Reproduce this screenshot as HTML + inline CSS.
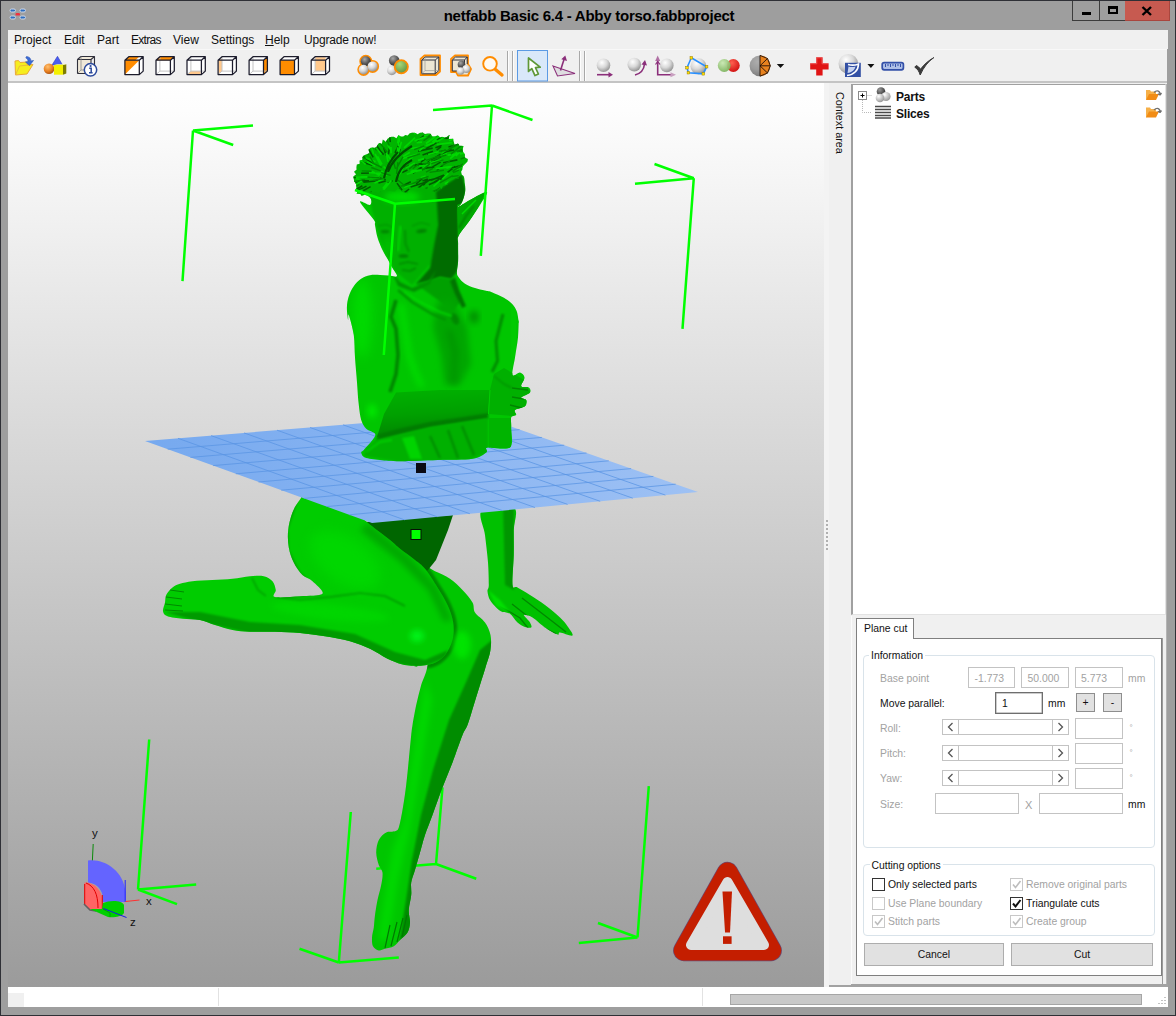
<!DOCTYPE html>
<html lang="en">
<head>
<meta charset="utf-8">
<title>netfabb Basic 6.4 - Abby torso.fabbproject</title>
<style>
html,body{margin:0;padding:0;}
body{width:1176px;height:1016px;overflow:hidden;position:relative;background:#9e9e9e;font-family:"Liberation Sans",sans-serif;font-size:12px;color:#000;}
.abs{position:absolute;}
#frame{left:0;top:0;width:1176px;height:1016px;box-sizing:border-box;border:1px solid #2f3036;}
#title{left:1px;top:5.5px;width:1176px;text-align:center;font-weight:bold;font-size:15px;line-height:20px;color:#000;letter-spacing:-0.25px;}
#capbtns{left:1072px;top:1px;height:20px;}
.cb{position:absolute;top:0;height:20px;box-sizing:border-box;border:1px solid #3c3c3c;border-top:none;}
#menubar{left:8px;top:30px;width:1160px;height:19px;background:#f0f0f0;}
.mi{position:absolute;top:3px;line-height:14px;font-size:12px;white-space:nowrap;color:#111;}
#toolbar{left:8px;top:49px;width:1159px;height:33px;background:#f0f0f0;border-top:1px solid #f8f8f8;box-sizing:border-box;}
#tbline{left:8px;top:81px;width:1159px;height:2px;background:#c4c4c4;}
#viewport{left:8px;top:83px;width:816px;height:904px;background:linear-gradient(#ffffff 0%,#fdfdfd 3%,#9b9b9b 100%);overflow:hidden;}
#splitter{left:824px;top:83px;width:5px;height:904px;background:#f3f3f3;}
#ctx{left:829px;top:83px;width:22px;height:904px;background:#f0f0f0;}
#ctxtext{left:845.5px;top:92px;font-size:10.8px;line-height:12px;white-space:nowrap;transform-origin:0 0;transform:rotate(90deg);color:#111;}
#rightbg{left:851px;top:83px;width:316px;height:904px;background:#f0f0f0;}
#tree{left:851px;top:84px;width:315px;height:531px;box-sizing:border-box;background:#fff;border-left:2px solid #a0a0a0;border-top:1px solid #a0a0a0;border-right:1px solid #e3e3e3;border-bottom:1px solid #e3e3e3;}
.tl{position:absolute;font-weight:bold;font-size:12px;line-height:14px;color:#111;letter-spacing:-0.2px;}
#tabpage{left:856px;top:638px;width:1161px;}
.f{font-size:10.4px;line-height:12px;white-space:nowrap;position:absolute;color:#111;margin-top:1.5px;}
.g{color:#a2a2a2;}
.inp{position:absolute;box-sizing:border-box;background:#fff;border:1px solid #c3c3c3;}
.gb{position:absolute;box-sizing:border-box;border:1px solid #d9e3ea;border-radius:4px;}
.gbt{position:absolute;background:#fff;padding:0 2px;}
.sb{position:absolute;box-sizing:border-box;height:16px;background:#fff;border:1px solid #c3c3c3;}
.sb i{position:absolute;top:0;width:16px;height:14px;box-sizing:border-box;}
.btn{position:absolute;box-sizing:border-box;background:#e1e1e1;border:1px solid #8e8e8e;text-align:center;margin-top:0 !important;}
.cbx{position:absolute;box-sizing:border-box;width:13px;height:13px;background:#fff;border:1px solid #c8c8c8;}
#status{left:8px;top:987px;width:1160px;height:20px;background:#fff;}
</style>
</head>
<body>
<div id="frame" class="abs"></div>
<div id="title" class="abs">netfabb Basic 6.4 - Abby torso.fabbproject</div>
<!-- caption buttons -->
<div id="capbtns" class="abs">
  <div class="cb" style="left:0;width:28px;background:#9e9e9e;"><div class="abs" style="left:9px;top:11px;width:9px;height:3px;background:#000;"></div></div>
  <div class="cb" style="left:27px;width:27px;background:#9e9e9e;border-left:1px solid #3c3c3c;"><div class="abs" style="left:8px;top:5px;width:10px;height:8px;box-sizing:border-box;border:2px solid #000;border-top-width:3px;"></div></div>
  <div class="cb" style="left:53px;width:45px;background:#c75a50;border-left:none;border-color:#a9463e;"><svg class="abs" style="left:16px;top:5px" width="12" height="10" viewBox="0 0 12 10"><path d="M1.5 1 L10 9 M10 1 L1.5 9" stroke="#000" stroke-width="2.4" fill="none"/></svg></div>
</div>
<!-- app icon -->
<svg class="abs" style="left:8px;top:6px" width="20" height="18" viewBox="0 0 20 18">
  <g fill="#2e6fc0" stroke="#cfd8e8" stroke-width="1">
  <rect x="2" y="3" width="5.5" height="3" rx="1.5"/><rect x="12" y="3" width="5.5" height="3" rx="1.5"/>
  <rect x="2" y="10" width="5.5" height="3" rx="1.5"/><rect x="12" y="10" width="5.5" height="3" rx="1.5"/></g>
  <rect x="7.5" y="7" width="4.5" height="2.6" rx="1.2" fill="#f03040"/>
</svg>
<div id="menubar" class="abs">
  <span class="mi" style="left:6px">Project</span>
  <span class="mi" style="left:56px">Edit</span>
  <span class="mi" style="left:89px">Part</span>
  <span class="mi" style="left:123px;letter-spacing:-0.7px">Extras</span>
  <span class="mi" style="left:165px">View</span>
  <span class="mi" style="left:203px">Settings</span>
  <span class="mi" style="left:257px"><u>H</u>elp</span>
  <span class="mi" style="left:296px;letter-spacing:-0.2px">Upgrade now!</span>
</div>
<div id="toolbar" class="abs"></div>
<div id="tbline" class="abs"></div>
<svg class="abs" style="left:8px;top:49px" width="1159" height="34" viewBox="8 49 1159 34">
<defs>
<radialGradient id="sL" cx="38%" cy="30%" r="75%"><stop offset="0" stop-color="#ffffff"/><stop offset=".5" stop-color="#d8d8d8"/><stop offset="1" stop-color="#8c8c8c"/></radialGradient>
<radialGradient id="sD" cx="38%" cy="30%" r="75%"><stop offset="0" stop-color="#a8a8a8"/><stop offset=".6" stop-color="#555"/><stop offset="1" stop-color="#2c2c2c"/></radialGradient>
<radialGradient id="sO" cx="38%" cy="30%" r="75%"><stop offset="0" stop-color="#ffc070"/><stop offset=".6" stop-color="#e88020"/><stop offset="1" stop-color="#a04c10"/></radialGradient>
<radialGradient id="sG" cx="38%" cy="30%" r="75%"><stop offset="0" stop-color="#a8d878"/><stop offset="1" stop-color="#5c9040"/></radialGradient>
<radialGradient id="sG2" cx="38%" cy="30%" r="75%"><stop offset="0" stop-color="#c8e8b0"/><stop offset="1" stop-color="#78b058"/></radialGradient>
<radialGradient id="sR" cx="38%" cy="30%" r="75%"><stop offset="0" stop-color="#ff6050"/><stop offset="1" stop-color="#d01010"/></radialGradient>
</defs>
<path d="M15.5 75 L15 61 L18.5 60.5 L20 62.5 L27 62 L27.5 65 L33 64.5 L27 74Z" fill="#f6ee1e" stroke="#eaa838" stroke-width="1"/>
<path d="M15.5 75 L19.5 66 L33 64.5" fill="none" stroke="#e8b040" stroke-width=".8"/>
<path d="M26.5 56.5 C30 57 31 59 30.8 61 L33.5 60.5 L29.5 65.5 L25.5 62 L28 61.6 C28 60 27.5 58.5 25.8 58Z" fill="#3a6cd8" stroke="#2a50b0" stroke-width=".6"/>
<path d="M57.5 56.3 L62.5 65 L52 65Z" fill="#4a5cf0" stroke="#3040c0" stroke-width=".6"/>
<circle cx="49" cy="68.8" r="5.3" fill="url(#sO)"/>
<path d="M54 65 H63 V74.7 H54Z" fill="#f4f000"/><path d="M63 65 L66.3 64.2 V73.6 L63 74.7Z" fill="#7c7c00"/><path d="M54 65 L57 64.2 H66.3 L63 65Z" fill="#fcfc80"/>
<path d="M77.5 59.5 H91 V73.5 H77.5Z M77.5 59.5 L81 56.5 H94.5 L91 59.5 M94.5 56.5 V70 L91 73.5" fill="#efe8d8" stroke="#30303c" stroke-width="1.1" stroke-linejoin="round"/>
<path d="M81 56.5 V70 H94.5 M81 70 L77.5 73.5" stroke="#8a8a8a" stroke-width=".8" fill="none"/>
<circle cx="90.5" cy="69.8" r="6.2" fill="#fff" stroke="#2c4a9c" stroke-width="1.5"/>
<path d="M89.2 68.3 H91.2 V72.6 M89 72.8 H92.6" stroke="#2c4a9c" stroke-width="1.5" fill="none"/><circle cx="90.6" cy="66" r="1.1" fill="#2c4a9c"/>
<path d="M124.9 60.2 H139.3 V74.6 H124.9Z" fill="#fff"/><path d="M124.9 60.2 L128.8 56.7 L143.2 56.7 L139.3 60.2Z" fill="#fff"/><path d="M139.3 60.2 L143.2 56.7 L143.2 71.1 L139.3 74.6Z" fill="#fff"/><path d="M124.9 60.2 H139.3 L124.9 74.6Z" fill="#ff8c00"/><path d="M124.9 60.2 L128.8 56.7 L139.2 56.7 L135.3 60.2Z" fill="#ff8c00"/><path d="M124.9 60.2 H139.3 V74.6 H124.9Z M124.9 60.2 L128.8 56.7 H143.2 L139.3 60.2 M143.2 56.7 V71.1 L139.3 74.6" stroke="#1c1c2c" stroke-width="1.25" fill="none" stroke-linejoin="round"/>
<path d="M156.0 60.2 H170.4 V74.6 H156.0Z" fill="#fff"/><path d="M156.0 60.2 L159.9 56.7 L174.3 56.7 L170.4 60.2Z" fill="#fff"/><path d="M170.4 60.2 L174.3 56.7 L174.3 71.1 L170.4 74.6Z" fill="#fff"/><path d="M156.0 60.2 L159.9 56.7 L174.3 56.7 L170.4 60.2Z" fill="#ff8c00"/><path d="M159.9 56.7 V71.1 H174.3 M156.0 74.6 L159.9 71.1" stroke="#c4c4c4" stroke-width="1" fill="none"/><path d="M156.0 60.2 H170.4 V74.6 H156.0Z M156.0 60.2 L159.9 56.7 H174.3 L170.4 60.2 M174.3 56.7 V71.1 L170.4 74.6" stroke="#1c1c2c" stroke-width="1.25" fill="none" stroke-linejoin="round"/>
<path d="M187.0 60.2 H201.4 V74.6 H187.0Z" fill="#fff"/><path d="M187.0 60.2 L190.9 56.7 L205.3 56.7 L201.4 60.2Z" fill="#fff"/><path d="M201.4 60.2 L205.3 56.7 L205.3 71.1 L201.4 74.6Z" fill="#fff"/><path d="M188.0 74.1 L190.9 71.1 L200.4 71.1 L200.4 74.1Z" fill="#ffc88c"/><path d="M190.9 56.7 V71.1 H205.3 M187.0 74.6 L190.9 71.1" stroke="#c4c4c4" stroke-width="1" fill="none"/><path d="M187.0 60.2 H201.4 V74.6 H187.0Z M187.0 60.2 L190.9 56.7 H205.3 L201.4 60.2 M205.3 56.7 V71.1 L201.4 74.6" stroke="#1c1c2c" stroke-width="1.25" fill="none" stroke-linejoin="round"/>
<path d="M218.1 60.2 H232.5 V74.6 H218.1Z" fill="#fff"/><path d="M218.1 60.2 L222.0 56.7 L236.4 56.7 L232.5 60.2Z" fill="#fff"/><path d="M232.5 60.2 L236.4 56.7 L236.4 71.1 L232.5 74.6Z" fill="#fff"/><path d="M218.6 61.2 L222.0 58.2 L222.0 71.1 L218.6 73.6Z" fill="#ffc88c"/><path d="M222.0 56.7 V71.1 H236.4 M218.1 74.6 L222.0 71.1" stroke="#c4c4c4" stroke-width="1" fill="none"/><path d="M218.1 60.2 H232.5 V74.6 H218.1Z M218.1 60.2 L222.0 56.7 H236.4 L232.5 60.2 M236.4 56.7 V71.1 L232.5 74.6" stroke="#1c1c2c" stroke-width="1.25" fill="none" stroke-linejoin="round"/>
<path d="M249.1 60.2 H263.5 V74.6 H249.1Z" fill="#fff"/><path d="M249.1 60.2 L253.0 56.7 L267.4 56.7 L263.5 60.2Z" fill="#fff"/><path d="M263.5 60.2 L267.4 56.7 L267.4 71.1 L263.5 74.6Z" fill="#fff"/><path d="M263.5 60.2 L267.4 56.7 L267.4 71.1 L263.5 74.6Z" fill="#ff8c00"/><path d="M253.0 56.7 V71.1 H267.4 M249.1 74.6 L253.0 71.1" stroke="#c4c4c4" stroke-width="1" fill="none"/><path d="M249.1 60.2 H263.5 V74.6 H249.1Z M249.1 60.2 L253.0 56.7 H267.4 L263.5 60.2 M267.4 56.7 V71.1 L263.5 74.6" stroke="#1c1c2c" stroke-width="1.25" fill="none" stroke-linejoin="round"/>
<path d="M280.1 60.2 H294.5 V74.6 H280.1Z" fill="#fff"/><path d="M280.1 60.2 L284.0 56.7 L298.4 56.7 L294.5 60.2Z" fill="#fff"/><path d="M294.5 60.2 L298.4 56.7 L298.4 71.1 L294.5 74.6Z" fill="#fff"/><path d="M280.1 60.2 H294.5 V74.6 H280.1Z" fill="#ff8c00"/><path d="M280.1 60.2 H294.5 V74.6 H280.1Z M280.1 60.2 L284.0 56.7 H298.4 L294.5 60.2 M298.4 56.7 V71.1 L294.5 74.6" stroke="#1c1c2c" stroke-width="1.25" fill="none" stroke-linejoin="round"/>
<path d="M311.2 60.2 H325.6 V74.6 H311.2Z" fill="#fff"/><path d="M311.2 60.2 L315.1 56.7 L329.5 56.7 L325.6 60.2Z" fill="#fff"/><path d="M325.6 60.2 L329.5 56.7 L329.5 71.1 L325.6 74.6Z" fill="#fff"/><path d="M315.1 57.2 H325.6 V71.1 H315.1Z" fill="#ffc88c"/><path d="M315.1 56.7 V71.1 H329.5 M311.2 74.6 L315.1 71.1" stroke="#c4c4c4" stroke-width="1" fill="none"/><path d="M311.2 60.2 H325.6 V74.6 H311.2Z M311.2 60.2 L315.1 56.7 H329.5 L325.6 60.2 M329.5 56.7 V71.1 L325.6 74.6" stroke="#1c1c2c" stroke-width="1.25" fill="none" stroke-linejoin="round"/>
<g stroke="#ff8c00" stroke-width="3"><circle cx="365.8" cy="61.3" r="5"/><circle cx="372.6" cy="66.4" r="5"/><circle cx="363.6" cy="69.6" r="4.8"/></g>
<circle cx="365.8" cy="61.3" r="5" fill="url(#sD)"/><circle cx="372.6" cy="66.4" r="5" fill="url(#sL)"/><circle cx="363.6" cy="69.6" r="4.8" fill="url(#sL)"/>
<circle cx="394.2" cy="60.6" r="5.3" fill="url(#sD)"/><circle cx="391.8" cy="70.4" r="4.8" fill="url(#sL)"/>
<circle cx="401.3" cy="66.8" r="6.6" fill="url(#sG)" stroke="#ff8c00" stroke-width="1.8"/>
<path d="M420.5 59 L424.5 55.5 H440 V71.5 L436 75 H420.5Z" fill="#ece6d4" stroke="#ff8c00" stroke-width="1.8" stroke-linejoin="round"/>
<path d="M421.8 60 H435.2 V73.8 H421.8Z M421.8 60 L425 57 H438.8 L435.2 60 M438.8 57 V70.6 L435.2 73.8" fill="none" stroke="#30303c" stroke-width="1"/>
<path d="M425 57 V70.6 H438.8 M425 70.6 L421.8 73.8" stroke="#9a9a9a" stroke-width=".7" fill="none"/>
<path d="M451 59 L455 55.5 H468 V64 L471 69 L468 75.5 H458 L456 72 H451Z" fill="#ece6d4" stroke="#ff8c00" stroke-width="1.8" stroke-linejoin="round"/>
<path d="M452.3 60 H464.5 V71 H452.3Z M452.3 60 L455.5 57 H467.2 L464.5 60 M467.2 57 V64" fill="none" stroke="#30303c" stroke-width="1"/>
<circle cx="461.5" cy="64.5" r="3.8" fill="url(#sD)"/><circle cx="466.3" cy="69" r="4" fill="url(#sL)"/><circle cx="460.5" cy="71" r="3.8" fill="url(#sL)"/>
<path d="M495.5 69.5 L502 75" stroke="#ff8c00" stroke-width="3.4" stroke-linecap="round"/>
<circle cx="490" cy="63.8" r="6.8" fill="#fffaf2" stroke="#ff8c00" stroke-width="1.9"/>
<path d="M507.5 51 V81 M512.5 51 V81 M579.5 51 V81 M584.5 51 V81" stroke="#a8a8a8" stroke-width="1"/>
<path d="M508.5 51 V81 M513.5 51 V81 M580.5 51 V81 M585.5 51 V81" stroke="#fdfdfd" stroke-width="1"/>
<rect x="517.5" y="50.5" width="30" height="30.5" fill="#d9e8f9" stroke="#5b9ae4" stroke-width="1"/>
<path d="M528.5 58 V71.4 L531.8 68.6 L535 75.6 L538.4 74 L535.5 67.6 L540.2 67.2Z" fill="#fff" stroke="#5f9838" stroke-width="1.7" stroke-linejoin="round"/>
<path d="M553 66 L575 73.5 L557.5 76Z" fill="#dedde0" stroke="#8b2f7a" stroke-width="1.1"/>
<path d="M560.5 70.5 L564.3 58.5" stroke="#8b2f7a" stroke-width="1.6"/><path d="M565.3 55.5 L567 61 L561.3 59.3Z" fill="#8b2f7a"/>
<circle cx="603.5" cy="65.3" r="6.8" fill="url(#sL)"/>
<path d="M597 74.7 H609" stroke="#8b2f7a" stroke-width="1.6"/><path d="M608.5 72 L613 74.7 L608.5 77.4Z" fill="#8b2f7a"/>
<circle cx="634.3" cy="64.6" r="6.8" fill="url(#sL)"/>
<path d="M635 75 C641 73.5 644 69 644.5 64" stroke="#8b2f7a" stroke-width="1.6" fill="none"/><path d="M641.5 64.5 L645 60 L647 65.5Z" fill="#8b2f7a"/>
<circle cx="666.8" cy="65.4" r="6.8" fill="url(#sL)"/>
<path d="M657.7 60 V74.7 H671" stroke="#8b2f7a" stroke-width="1.6" fill="none"/><path d="M655.2 61 L657.7 55.5 L660.2 61Z" fill="#b070a4"/><path d="M670.5 72.2 L676 74.7 L670.5 77.2Z" fill="#c9a0c0"/><path d="M655.5 64.5 L657.7 61.5 L660 64.5" fill="none" stroke="#8b2f7a" stroke-width="1.2"/>
<circle cx="698.5" cy="66.3" r="8" fill="url(#sL)"/>
<path d="M691.3 57.8 L706.6 66.7 L703.3 73.8 L688.4 72.7 L687 67.7Z" fill="none" stroke="#2890ff" stroke-width="1.6"/>
<rect x="690.0" y="56.5" width="2.6" height="2.6" fill="#ffe000" stroke="#a08000" stroke-width=".5"/>
<rect x="705.3" y="65.4" width="2.6" height="2.6" fill="#ffe000" stroke="#a08000" stroke-width=".5"/>
<rect x="702.0" y="72.5" width="2.6" height="2.6" fill="#ffe000" stroke="#a08000" stroke-width=".5"/>
<rect x="687.1" y="71.4" width="2.6" height="2.6" fill="#ffe000" stroke="#a08000" stroke-width=".5"/>
<rect x="685.7" y="66.4" width="2.6" height="2.6" fill="#ffe000" stroke="#a08000" stroke-width=".5"/>
<circle cx="733.3" cy="65.5" r="6.4" fill="url(#sR)"/><circle cx="724.2" cy="65.5" r="6.4" fill="url(#sG2)" opacity=".93"/>
<circle cx="760" cy="65.8" r="10.4" fill="url(#sL)"/><path d="M760 55.4 A10.4 10.4 0 0 0 760 76.2Z" fill="#6a6a6a" opacity=".55"/>
<path d="M760 55.4 A10.4 10.4 0 0 1 760 76.2Z" fill="#e8821e"/>
<path d="M760 55.4 V76.2 M760 65.8 L770.3 65.8 M760 65.8 L767.5 58.5 M760 65.8 L767.5 73 M760 55.4 L767.5 58.5 L770.3 65.8 L767.5 73 L760 76.2" stroke="#201008" stroke-width=".9" fill="none"/>
<path d="M776.8 64 H784.2 L780.5 68Z M867.4 64 H874.4 L870.9 68Z" fill="#111"/>
<path d="M816.2 57.2 H822.6 V63.2 H828.6 V69.6 H822.6 V75.6 H816.2 V69.6 H810.2 V63.2 H816.2Z" fill="#e01414"/>
<path d="M816.8 57.8 H822 V63.8 H828 M816.8 57.8 V63.8 H810.8" stroke="#f06060" stroke-width=".8" fill="none"/>
<circle cx="848.3" cy="63.8" r="9.8" fill="url(#sL)"/>
<rect x="845" y="62.8" width="15.8" height="14.2" fill="#3350a4"/>
<path d="M848 64.5 C854 66 857 64.5 858.5 64 C858.5 70 854 75 847 75.5" fill="none" stroke="#fff" stroke-width="1.6"/><path d="M848.5 66.5 C851 67.5 854 67 855.5 66.5 C855 69.5 852 72.5 847.5 73" fill="#c8d4f0"/>
<rect x="882.2" y="62.6" width="21.2" height="7.2" rx="2" fill="#aebfe6" stroke="#3350a8" stroke-width="1.7"/>
<path d="M885.5 64 V67 M888 64 V66 M890.5 64 V67 M893 64 V66 M895.5 64 V67 M898 64 V66 M900.5 64 V67" stroke="#3350a8" stroke-width="1"/>
<path d="M914.8 67.2 C917.5 69 919 71 920.2 75 C923.5 67.5 928 61.5 933.8 57.6 C928.5 60.5 923.5 65 920.5 69.3 C919.5 67.5 918 66.3 916.2 65.6Z" fill="#3a3a3a" stroke="#3a3a3a" stroke-width="1" stroke-linejoin="round"/>
</svg>
<div id="viewport" class="abs">
<svg class="abs" style="left:0;top:0" width="816" height="904" viewBox="8 83 816 904">
<defs>
<linearGradient id="pl" x1="0" y1="0" x2="1" y2="0"><stop offset="0" stop-color="#76a9ef"/><stop offset="1" stop-color="#9ec1f4"/></linearGradient>
<linearGradient id="fa" x1="0" y1="0" x2="0.15" y2="1"><stop offset="0" stop-color="#00b200"/><stop offset=".55" stop-color="#00a000"/><stop offset="1" stop-color="#008600"/></linearGradient>
<filter id="b0" x="-10%" y="-10%" width="120%" height="120%"><feGaussianBlur stdDeviation="0.6"/></filter>
<filter id="b1" x="-30%" y="-30%" width="160%" height="160%"><feGaussianBlur stdDeviation="1.2"/></filter>
<filter id="b3" x="-30%" y="-30%" width="160%" height="160%"><feGaussianBlur stdDeviation="3"/></filter>
<filter id="b6" x="-50%" y="-50%" width="200%" height="200%"><feGaussianBlur stdDeviation="6"/></filter>
<clipPath id="cUp"><path d="M356.2 190.0 C356.2 187.7 363.5 185.4 370.0 183.8 C376.5 182.1 386.7 180.8 395.0 180.0 C403.3 179.2 411.7 179.2 420.0 178.8 C428.3 178.3 438.0 178.1 445.0 177.5 C452.0 176.9 458.6 174.0 461.9 175.0 C465.2 176.0 464.2 180.8 464.8 183.8 C465.3 186.7 465.5 189.4 465.0 192.5 C464.5 195.6 463.1 200.0 461.9 202.5 C460.6 205.0 456.1 207.9 457.5 207.5 C458.9 207.1 465.1 202.6 470.0 200.0 C474.9 197.4 485.2 191.0 486.9 191.9 C488.5 192.7 482.8 200.3 480.0 205.0 C477.2 209.7 473.5 214.9 470.0 220.0 C466.5 225.1 460.7 231.7 458.8 235.6 C456.8 239.6 458.2 239.5 458.1 243.8 C458.0 248.0 458.3 256.5 458.1 261.2 C457.9 266.0 456.8 269.8 456.9 272.5 C457.0 275.2 457.4 275.6 458.8 277.5 C460.1 279.4 462.3 282.0 465.0 283.8 C467.7 285.5 471.7 287.0 475.0 288.1 C478.3 289.3 482.1 289.9 485.0 290.6 C487.9 291.4 488.8 290.9 492.5 292.5 C496.2 294.1 503.5 297.1 507.5 300.0 C511.5 302.9 514.4 306.2 516.2 310.0 C518.1 313.8 518.3 320.8 518.8 322.5 C519.2 324.2 518.9 317.5 518.8 320.0 C518.6 322.5 518.6 331.2 518.0 337.5 C517.4 343.8 515.9 351.2 515.0 357.5 C514.1 363.8 511.7 372.5 512.5 375.0 C513.3 377.5 518.0 372.1 520.0 372.5 C522.0 372.9 524.3 375.2 524.5 377.5 C524.7 379.8 520.5 384.6 521.2 386.2 C522.0 387.9 527.3 386.5 528.8 387.5 C530.2 388.5 531.2 390.8 530.0 392.5 C528.8 394.2 521.9 396.2 521.2 397.5 C520.6 398.8 525.6 398.5 526.2 400.0 C526.9 401.5 526.9 404.6 525.0 406.2 C523.1 407.9 516.5 408.5 515.0 410.0 C513.5 411.5 516.9 413.8 516.2 415.0 C515.6 416.2 512.1 415.4 511.2 417.5 C510.4 419.6 511.5 422.5 511.2 427.5 C511.0 432.5 514.0 444.2 510.0 447.5 C506.0 450.8 491.5 446.7 487.5 447.5 C483.5 448.3 488.8 450.6 486.2 452.5 C483.8 454.4 480.6 457.5 472.5 458.8 C464.4 460.0 449.6 459.6 437.5 460.0 C425.4 460.4 409.6 461.2 400.0 461.2 C390.4 461.2 385.8 460.6 380.0 460.0 C374.2 459.4 368.1 458.8 365.0 457.5 C361.9 456.2 361.5 453.8 361.2 452.5 C361.0 451.2 361.9 452.1 363.8 450.0 C365.6 447.9 370.6 442.7 372.5 440.0 C374.4 437.3 376.0 435.6 375.0 433.8 C374.0 431.9 368.5 431.0 366.2 428.8 C364.0 426.5 362.5 424.0 361.2 420.0 C360.0 416.0 359.5 411.2 358.8 405.0 C358.0 398.8 357.6 390.4 357.0 382.5 C356.4 374.6 355.5 365.4 355.0 357.5 C354.5 349.6 354.8 342.1 353.8 335.0 C352.7 327.9 349.7 317.5 348.8 315.0 C347.8 312.5 348.4 321.2 348.1 320.0 C347.8 318.8 346.8 311.5 346.9 307.5 C347.0 303.5 347.6 299.8 348.8 296.2 C349.9 292.7 351.7 289.2 353.8 286.2 C355.8 283.3 358.5 280.6 361.2 278.8 C364.0 276.9 366.9 275.9 370.0 275.2 C373.1 274.6 376.9 274.9 380.0 275.0 C383.1 275.1 385.9 275.4 388.8 275.6 C391.6 275.8 396.2 277.5 396.9 276.2 C397.5 275.0 393.9 270.6 392.5 268.1 C391.1 265.6 390.4 264.3 388.8 261.2 C387.1 258.2 384.4 254.0 382.5 250.0 C380.6 246.0 378.8 241.7 377.5 237.5 C376.2 233.3 375.6 227.9 375.0 225.0 C374.4 222.1 376.5 223.9 374.0 220.0 C371.5 216.1 360.7 204.4 360.0 201.9 C359.3 199.4 368.3 205.7 370.0 205.0 C371.7 204.3 372.3 200.0 370.0 197.5 C367.7 195.0 356.2 192.3 356.2 190.0Z"/></clipPath>
<clipPath id="cHair"><path d="M353.7 178.6 L353.4 176.2 L356.0 174.4 L354.1 171.6 L356.5 169.8 L356.4 167.2 L356.8 164.5 L359.7 163.8 L359.5 160.7 L362.3 159.8 L362.5 157.0 L364.1 155.2 L366.6 154.2 L369.4 153.3 L368.5 149.7 L370.6 147.8 L373.6 147.8 L376.3 147.5 L377.4 144.9 L379.0 142.9 L381.9 143.8 L382.8 139.4 L386.0 141.9 L387.4 138.9 L389.3 137.6 L391.5 136.8 L393.9 136.8 L396.4 138.2 L398.4 135.2 L400.9 136.6 L403.2 136.5 L405.3 135.1 L407.7 135.5 L409.7 133.2 L412.2 132.7 L414.8 132.8 L417.6 134.3 L420.0 132.8 L422.6 132.6 L425.0 133.9 L427.5 133.6 L430.2 133.6 L432.2 136.2 L434.8 136.4 L437.8 135.2 L440.0 137.2 L442.2 136.7 L444.6 137.8 L446.7 136.9 L449.5 135.1 L448.7 138.9 L453.1 138.7 L453.7 141.5 L454.6 144.7 L457.9 143.5 L459.6 145.8 L463.6 146.0 L462.5 149.7 L463.3 152.3 L465.0 154.5 L464.8 157.4 L467.9 159.1 L467.6 161.2 L466.0 163.0 L464.2 164.5 L462.7 166.2 L462.4 169.5 L461.1 171.8 L461.9 175.1 L459.4 175.7 L458.6 179.1 L455.1 178.0 L453.1 179.5 L450.3 179.5 L448.5 181.3 L447.6 184.5 L445.2 185.4 L442.7 185.4 L441.9 188.8 L439.1 188.1 L437.6 190.2 L434.6 191.6 L432.4 191.3 L431.0 187.8 L428.2 189.9 L426.2 188.9 L424.2 187.8 L422.5 185.3 L420.8 187.8 L418.0 187.5 L415.7 188.1 L413.0 187.9 L411.1 189.2 L408.9 190.1 L407.3 193.4 L404.9 192.3 L402.4 192.1 L400.3 189.4 L397.9 188.6 L395.0 191.5 L392.5 191.4 L390.0 191.1 L387.5 191.1 L385.0 190.1 L382.4 189.6 L380.2 191.5 L377.9 193.0 L375.1 191.8 L372.6 192.5 L369.9 192.2 L367.1 191.7 L365.3 193.6 L363.4 195.3 L361.6 195.9 L360.3 193.9 L356.7 193.7 L357.9 189.6 L356.2 188.7 L356.4 186.2 L355.9 183.7 L354.1 181.3Z"/></clipPath>
<clipPath id="cL1"><path d="M310.0 490.0 C301.7 489.1 302.9 495.8 300.0 499.5 C297.1 503.2 294.5 507.4 292.5 512.5 C290.5 517.6 288.9 524.2 288.2 530.0 C287.6 535.8 287.8 542.1 288.8 547.5 C289.7 552.9 291.5 557.9 293.8 562.5 C296.0 567.1 299.4 571.9 302.5 575.0 C305.6 578.1 309.2 578.1 312.5 581.2 C315.8 584.4 324.6 591.2 322.5 593.8 C320.4 596.2 307.9 595.7 300.0 596.2 C292.1 596.8 279.0 598.0 275.0 597.0 C271.0 596.0 276.2 592.6 275.8 590.0 C275.3 587.4 274.5 583.5 272.5 581.2 C270.5 579.0 267.5 577.1 263.8 576.2 C260.0 575.4 255.2 575.8 250.0 576.2 C244.8 576.7 238.8 578.1 232.5 578.8 C226.2 579.4 219.2 579.6 212.5 580.0 C205.8 580.4 197.9 580.6 192.5 581.2 C187.1 581.9 183.3 582.7 180.0 583.8 C176.7 584.8 174.8 585.6 172.5 587.5 C170.2 589.4 167.5 592.5 166.2 595.0 C165.0 597.5 165.5 599.8 165.0 602.5 C164.5 605.2 162.6 609.0 163.0 611.2 C163.4 613.5 164.2 615.0 167.5 616.2 C170.8 617.5 177.1 618.1 182.5 618.8 C187.9 619.4 194.6 619.0 200.0 620.0 C205.4 621.0 209.6 623.3 215.0 625.0 C220.4 626.7 226.7 628.9 232.5 630.0 C238.3 631.1 242.9 631.5 250.0 631.8 C257.1 632.0 266.7 631.5 275.0 631.8 C283.3 632.0 291.7 632.2 300.0 633.0 C308.3 633.8 316.7 634.9 325.0 636.2 C333.3 637.6 342.5 639.2 350.0 641.2 C357.5 643.3 363.8 645.8 370.0 648.8 C376.2 651.7 382.1 656.1 387.5 658.8 C392.9 661.4 397.5 663.2 402.5 664.5 C407.5 665.8 415.4 666.0 417.5 666.2 C419.6 666.5 412.5 666.7 415.0 666.2 C417.5 665.8 427.5 665.6 432.5 663.8 C437.5 661.9 441.7 659.0 445.0 655.0 C448.3 651.0 451.1 645.4 452.5 640.0 C453.9 634.6 454.1 628.3 453.2 622.5 C452.4 616.7 450.1 610.8 447.5 605.0 C444.9 599.2 441.2 593.5 437.5 587.5 C433.8 581.5 428.8 573.3 425.0 568.8 C421.2 564.2 419.2 563.3 415.0 560.0 C410.8 556.7 404.2 552.1 400.0 548.8 C395.8 545.4 395.4 544.4 390.0 540.0 C384.6 535.6 374.2 528.3 367.5 522.5 C360.8 516.7 359.6 510.4 350.0 505.0 C340.4 499.6 318.3 490.9 310.0 490.0Z"/></clipPath>
<clipPath id="cL2"><path d="M423.8 567.5 C425.4 564.0 430.6 569.4 435.0 571.2 C439.4 573.1 445.4 575.6 450.0 578.8 C454.6 581.9 458.8 586.0 462.5 590.0 C466.2 594.0 470.4 598.8 472.5 602.5 C474.6 606.2 472.9 609.2 475.0 612.5 C477.1 615.8 482.4 618.8 485.0 622.5 C487.6 626.2 489.6 630.4 490.5 635.0 C491.4 639.6 491.2 645.0 490.5 650.0 C489.8 655.0 488.0 659.2 486.2 665.0 C484.5 670.8 482.1 678.3 480.0 685.0 C477.9 691.7 475.8 698.3 473.8 705.0 C471.7 711.7 469.4 720.0 467.5 725.0 C465.6 730.0 465.0 728.8 462.5 735.0 C460.0 741.2 455.8 753.8 452.5 762.5 C449.2 771.2 445.8 778.8 442.5 787.5 C439.2 796.2 435.4 807.1 432.5 815.0 C429.6 822.9 427.1 828.8 425.0 835.0 C422.9 841.2 421.7 846.7 420.0 852.5 C418.3 858.3 416.5 865.0 415.0 870.0 C413.5 875.0 411.9 878.3 411.2 882.5 C410.6 886.7 411.7 890.4 411.2 895.0 C410.8 899.6 409.0 905.4 408.8 910.0 C408.5 914.6 410.2 918.8 410.0 922.5 C409.8 926.2 409.2 929.6 407.5 932.5 C405.8 935.4 402.3 937.7 400.0 940.0 C397.7 942.3 396.2 944.8 393.8 946.2 C391.2 947.7 387.5 948.0 385.0 948.8 C382.5 949.5 380.8 950.9 378.8 950.5 C376.8 950.1 374.1 948.4 373.0 946.2 C371.9 944.1 371.9 940.6 372.0 937.5 C372.1 934.4 373.2 931.2 373.8 927.5 C374.2 923.8 374.4 919.6 375.0 915.0 C375.6 910.4 376.5 905.0 377.5 900.0 C378.5 895.0 380.4 889.6 381.2 885.0 C382.1 880.4 382.9 875.8 382.5 872.5 C382.1 869.2 379.8 868.3 378.8 865.0 C377.7 861.7 376.2 856.7 376.2 852.5 C376.2 848.3 377.1 843.3 378.8 840.0 C380.4 836.7 383.5 834.0 386.2 832.5 C389.0 831.0 392.9 832.1 395.0 831.2 C397.1 830.4 397.5 831.0 398.8 827.5 C400.0 824.0 401.2 817.1 402.5 810.0 C403.8 802.9 405.2 793.3 406.2 785.0 C407.3 776.7 407.9 768.3 408.8 760.0 C409.6 751.7 410.6 740.8 411.2 735.0 C411.9 729.2 411.7 730.0 412.5 725.0 C413.3 720.0 414.8 711.7 416.2 705.0 C417.7 698.3 419.4 691.5 421.2 685.0 C423.1 678.5 425.6 675.4 427.5 666.2 C429.4 657.1 432.9 642.3 432.5 630.0 C432.1 617.7 426.5 602.9 425.0 592.5 C423.5 582.1 422.1 571.0 423.8 567.5Z"/></clipPath>
<clipPath id="cArm"><path d="M482.0 510.0 C477.2 514.6 484.0 526.2 485.0 535.0 C486.0 543.8 487.4 554.2 488.0 562.5 C488.6 570.8 488.8 580.2 488.8 585.0 C488.7 589.8 487.3 588.8 487.5 591.2 C487.7 593.8 488.5 597.3 490.0 600.0 C491.5 602.7 494.2 605.5 496.2 607.5 C498.3 609.5 500.2 611.0 502.5 612.0 C504.8 613.0 507.5 612.0 510.0 613.8 C512.5 615.5 515.0 620.3 517.5 622.5 C520.0 624.7 522.7 626.2 525.0 627.0 C527.3 627.8 530.4 628.2 531.2 627.5 C532.1 626.8 531.2 624.6 530.0 622.5 C528.8 620.4 523.3 615.8 523.8 615.0 C524.2 614.2 529.0 615.4 532.5 617.5 C536.0 619.6 540.8 624.7 545.0 627.5 C549.2 630.3 555.0 633.7 557.5 634.5 C560.0 635.3 557.5 632.3 560.0 632.5 C562.5 632.7 571.2 636.5 572.5 635.5 C573.8 634.5 569.6 629.2 567.5 626.2 C565.4 623.2 563.8 621.0 560.0 617.5 C556.2 614.0 550.0 608.8 545.0 605.0 C540.0 601.2 534.6 597.9 530.0 595.0 C525.4 592.1 520.4 589.2 517.5 587.5 C514.6 585.8 513.1 590.4 512.5 585.0 C511.9 579.6 513.5 564.2 513.8 555.0 C514.0 545.8 513.8 537.9 513.8 530.0 C513.8 522.1 519.0 510.8 513.8 507.5 C508.5 504.2 486.8 505.4 482.0 510.0Z"/></clipPath>
</defs>
<path d="M436 864 L442.5 787.5 M436 864 L476.25 878.75 M436 864 L376.25 868.75" stroke="#00ff00" stroke-width="2.5" fill="none"/>
<g clip-path="url(#cL2)"><rect x="360" y="540" width="160" height="430" fill="#00c600"/>
<path d="M492 640 L490 670 L474 725 L455 775 L436 826 L424 865 L414 925 L404 950 L398 950 L406 900 L412 860 L421 815 L433 770 L449 720 L467 680 L480 650Z" fill="#008c00" filter="url(#b1)"/>
<path d="M310.0 490.0 C301.7 489.1 302.9 495.8 300.0 499.5 C297.1 503.2 294.5 507.4 292.5 512.5 C290.5 517.6 288.9 524.2 288.2 530.0 C287.6 535.8 287.8 542.1 288.8 547.5 C289.7 552.9 291.5 557.9 293.8 562.5 C296.0 567.1 299.4 571.9 302.5 575.0 C305.6 578.1 309.2 578.1 312.5 581.2 C315.8 584.4 324.6 591.2 322.5 593.8 C320.4 596.2 307.9 595.7 300.0 596.2 C292.1 596.8 279.0 598.0 275.0 597.0 C271.0 596.0 276.2 592.6 275.8 590.0 C275.3 587.4 274.5 583.5 272.5 581.2 C270.5 579.0 267.5 577.1 263.8 576.2 C260.0 575.4 255.2 575.8 250.0 576.2 C244.8 576.7 238.8 578.1 232.5 578.8 C226.2 579.4 219.2 579.6 212.5 580.0 C205.8 580.4 197.9 580.6 192.5 581.2 C187.1 581.9 183.3 582.7 180.0 583.8 C176.7 584.8 174.8 585.6 172.5 587.5 C170.2 589.4 167.5 592.5 166.2 595.0 C165.0 597.5 165.5 599.8 165.0 602.5 C164.5 605.2 162.6 609.0 163.0 611.2 C163.4 613.5 164.2 615.0 167.5 616.2 C170.8 617.5 177.1 618.1 182.5 618.8 C187.9 619.4 194.6 619.0 200.0 620.0 C205.4 621.0 209.6 623.3 215.0 625.0 C220.4 626.7 226.7 628.9 232.5 630.0 C238.3 631.1 242.9 631.5 250.0 631.8 C257.1 632.0 266.7 631.5 275.0 631.8 C283.3 632.0 291.7 632.2 300.0 633.0 C308.3 633.8 316.7 634.9 325.0 636.2 C333.3 637.6 342.5 639.2 350.0 641.2 C357.5 643.3 363.8 645.8 370.0 648.8 C376.2 651.7 382.1 656.1 387.5 658.8 C392.9 661.4 397.5 663.2 402.5 664.5 C407.5 665.8 415.4 666.0 417.5 666.2 C419.6 666.5 412.5 666.7 415.0 666.2 C417.5 665.8 427.5 665.6 432.5 663.8 C437.5 661.9 441.7 659.0 445.0 655.0 C448.3 651.0 451.1 645.4 452.5 640.0 C453.9 634.6 454.1 628.3 453.2 622.5 C452.4 616.7 450.1 610.8 447.5 605.0 C444.9 599.2 441.2 593.5 437.5 587.5 C433.8 581.5 428.8 573.3 425.0 568.8 C421.2 564.2 419.2 563.3 415.0 560.0 C410.8 556.7 404.2 552.1 400.0 548.8 C395.8 545.4 395.4 544.4 390.0 540.0 C384.6 535.6 374.2 528.3 367.5 522.5 C360.8 516.7 359.6 510.4 350.0 505.0 C340.4 499.6 318.3 490.9 310.0 490.0Z" fill="none" stroke="#008a00" stroke-width="7" filter="url(#b1)"/>
<ellipse cx="462" cy="645" rx="9" ry="14" fill="#00f000" opacity=".7" filter="url(#b3)"/>
<path d="M425 680 L412 760 L404 820 L392 850 L384 900 L378 940 L388 940 L398 880 L410 830 L420 770 L432 700Z" fill="#00d800" filter="url(#b3)"/>
<path d="M385 948 L390 925 M391 946 L397 922 M397 942 L403 918 M402 937 L407 915" stroke="#007a00" stroke-width="1.2" fill="none"/>
</g>
<path d="M400.0 519.0 L453.0 515.0 L448.0 530.0 L442.0 545.0 L436.0 560.0 L428.0 570.0 L420.0 575.0 L400.0 565.0 L380.0 545.0 L366.0 522.0Z" fill="#006600"/>
<g clip-path="url(#cArm)"><rect x="470" y="500" width="110" height="140" fill="#00c000"/>
<path d="M503 505 L505 585 L514 590 L514 505Z" fill="#009600" filter="url(#b1)"/>
<path d="M500 606 L520 618 L528 628 M512 604 L540 626 L556 634 M522 598 L548 618 L566 632" stroke="#008800" stroke-width="1.4" fill="none"/>
<path d="M488 590 L496 606 L510 612 L500 600Z" fill="#00e000" filter="url(#b1)"/>
</g>
<g clip-path="url(#cL1)"><rect x="150" y="480" width="320" height="200" fill="#00cc00"/>
<path d="M165 612 L200 622 L250 633 L300 635 L350 643 L390 662 L420 668 L445 658 L455 630 L448 650 L425 660 L395 652 L355 634 L300 625 L250 622 L200 612Z" fill="#009a00" filter="url(#b1)"/>
<path d="M368 523 L410 557 L437 587 L452 620 L444 622 L428 590 L400 562 L360 530Z" fill="#00a800" filter="url(#b3)"/>
<path d="M298 500 L288 530 L289 550 L300 572 L322 592 L316 596 L294 576 L284 550 L284 528 L292 502Z" fill="#00a400" filter="url(#b1)"/>
<path d="M322 593 L300 596 L276 597 L300 600 L330 597 L360 593 L385 596 L405 606" stroke="#009800" stroke-width="1.6" fill="none" filter="url(#b1)"/>
<ellipse cx="345" cy="560" rx="40" ry="22" transform="rotate(35 345 560)" fill="#00e000" opacity=".55" filter="url(#b6)"/>
<ellipse cx="417" cy="636" rx="7" ry="6" fill="#00ff20" opacity=".8" filter="url(#b3)"/>
<ellipse cx="330" cy="612" rx="60" ry="8" transform="rotate(6 330 612)" fill="#00e000" opacity=".5" filter="url(#b3)"/>
<path d="M252 578 L258 590 L266 596" stroke="#009c00" stroke-width="1.5" fill="none" filter="url(#b1)"/>
<path d="M170 590 L184 592 M166 597 L182 599 M165 604 L182 606 M165 610 L183 611" stroke="#008a00" stroke-width="1.2" fill="none"/>
</g>
<path d="M145 441 L475 414 L698 492 L372 523Z" fill="url(#pl)"/>
<path d="M178.0 438.3 L404.6 519.9 M167.7 449.2 L497.3 421.8 M211.0 435.6 L437.2 516.8 M190.4 457.4 L519.6 429.6 M244.0 432.9 L469.8 513.7 M213.1 465.6 L541.9 437.4 M277.0 430.2 L502.4 510.6 M235.8 473.8 L564.2 445.2 M310.0 427.5 L535.0 507.5 M258.5 482.0 L586.5 453.0 M343.0 424.8 L567.6 504.4 M281.2 490.2 L608.8 460.8 M376.0 422.1 L600.2 501.3 M303.9 498.4 L631.1 468.6 M409.0 419.4 L632.8 498.2 M326.6 506.6 L653.4 476.4 M442.0 416.7 L665.4 495.1 M349.3 514.8 L675.7 484.2 " stroke="#5a94e4" stroke-width="0.9" fill="none" opacity=".85"/>
<g clip-path="url(#cUp)"><rect x="340" y="170" width="200" height="300" fill="#00c600"/>
<path d="M368 190 L440 186 L438 230 L432 262 L412 285 L394 270 L380 240 L372 210Z" fill="#00b000" filter="url(#b1)"/>
<ellipse cx="402" cy="197" rx="18" ry="6" fill="#00e400" opacity=".8" filter="url(#b3)"/>
<path d="M436 192 L445 185 L462 174 L466 190 L465 200 L458 210 L459 261 L457 272 L451 279 L440 277 L428 282 L416 284 L430 268 L434 245 L438 225 L437 205Z" fill="#006c00" filter="url(#b1)"/>
<path d="M416 284 L440 277 L452 279 L462 300 L452 312 L438 300Z" fill="#00a000" filter="url(#b1)"/>
<path d="M455 277 L459 290 L466 306 L462 308 L455 294 L450 281Z" fill="#007400" filter="url(#b1)"/>
<path d="M457 205 L470 199 L486 192 L478 208 L468 224 L458 236Z" fill="#00a800"/>
<path d="M459 228 L466 216 L474 206" stroke="#007c00" stroke-width="1.6" fill="none" filter="url(#b1)"/>
<path d="M462 214 L476 200" stroke="#00d800" stroke-width="1.5"/>
<path d="M400.5 226 L399 240 L398 251" stroke="#00d000" stroke-width="2.4" fill="none" filter="url(#b1)"/>
<path d="M405 230 L405.5 244 L409 252" stroke="#009400" stroke-width="2.2" fill="none" filter="url(#b1)"/>
<ellipse cx="403.5" cy="256" rx="5" ry="1.8" fill="#008000" filter="url(#b1)"/>
<ellipse cx="388" cy="246" rx="5" ry="9" fill="#00c400" opacity=".7" filter="url(#b3)"/>
<path d="M399 264 L408 262 L418 264 M402 270 L410 271 L416 268" stroke="#008800" stroke-width="1.5" fill="none" filter="url(#b1)"/>
<ellipse cx="385" cy="231.5" rx="4.5" ry="1.8" fill="#008800" filter="url(#b1)"/><ellipse cx="421.5" cy="231" rx="5.5" ry="2" transform="rotate(-8 421.5 231)" fill="#008400" filter="url(#b1)"/>
<path d="M378 226 L386 224.5 L392 227 M412 226 L421 222.5 L430 225" stroke="#009a00" stroke-width="1.4" fill="none" filter="url(#b1)"/>
<path d="M392 272 L400 282 L412 288 L428 282 L436 270 L430 284 L414 292 L398 286Z" fill="#009000" filter="url(#b1)"/>
<ellipse cx="362" cy="318" rx="10" ry="40" fill="#00e000" opacity=".8" filter="url(#b6)"/>
<ellipse cx="372" cy="411" rx="5" ry="7" fill="#00f000" opacity=".8" filter="url(#b3)"/>
<path d="M437 302 L452 299 L467 327 L471 364 L460 385 L445 385 L441 355 L433 327Z" fill="#00a600" filter="url(#b3)"/>
<path d="M446 330 L452 352 L451 384 L456 384 L458 352 L452 330Z" fill="#009400" filter="url(#b3)"/>
<ellipse cx="455" cy="319" rx="3.5" ry="6" transform="rotate(-25 455 319)" fill="#008800" filter="url(#b1)"/>
<ellipse cx="474" cy="317" rx="5" ry="6.5" fill="#009000" filter="url(#b3)"/>
<path d="M404 292 L420 302 L440 312 L452 316" stroke="#00e000" stroke-width="2" fill="none" opacity=".7" filter="url(#b1)"/>
<path d="M398 290 L412 302 L432 314 L446 320" stroke="#009600" stroke-width="2.5" fill="none" filter="url(#b1)"/>
<path d="M401 304 L405 330 L409 355 L415 372 L422 387" stroke="#00e400" stroke-width="6" fill="none" opacity=".75" filter="url(#b3)"/>
<path d="M396 300 L391 317 L396 329 L398 355 L396 374 L390 392" stroke="#008600" stroke-width="3.6" fill="none" filter="url(#b1)"/>
<path d="M503 314 L496 341 L497.5 361 L492 372" stroke="#008c00" stroke-width="3" fill="none" filter="url(#b1)"/>
<path d="M512 300 L515 330 L513 360" stroke="#00d800" stroke-width="4" fill="none" opacity=".6" filter="url(#b3)"/>
<path d="M396 392.5 L440 390 L490 390 L488 415 L430 424 L400 431 L377 437 L384 414Z" fill="url(#fa)" filter="url(#b0)"/>
<path d="M378 434.5 L400 428.5 L430 422 L488 413.5 L488 419 L430 428 L400 435 L376 441Z" fill="#007c00" filter="url(#b1)"/>
<path d="M490 390 L494 374 L504 368 L514 374 L524 380 L530 392 L524 410 L512 416 L488 414Z" fill="#00b000"/>
<path d="M512 388 L528 390 M512 397 L524 399 M510 405 L522 408" stroke="#008400" stroke-width="1.4" fill="none"/>
<path d="M490 390 L488.5 414" stroke="#00d000" stroke-width="1" fill="none"/>
<path d="M494 376 L504 384 L512 388" stroke="#009400" stroke-width="1.5" fill="none" filter="url(#b1)"/>
<path d="M376 440 L430 427 L488 418 L488 452 L470 460 L400 462 L364 456 L366 448Z" fill="#00b000" filter="url(#b1)"/>
<path d="M430 436 L440 458 M448 430 L458 458 M462 426 L474 455" stroke="#009000" stroke-width="2.4" fill="none" filter="url(#b1)"/>
<path d="M402 438 L410 459 L422 459 L414 436Z" fill="#00e000" opacity=".75" filter="url(#b1)"/>
<path d="M366 452 L380 442 L392 440" stroke="#00dc00" stroke-width="2" fill="none" opacity=".7" filter="url(#b1)"/>
<path d="M489 418 L489 448 L511 448 L511.5 418Z" fill="#00b400"/>
<path d="M489.5 418 L489.5 448" stroke="#007000" stroke-width="2" filter="url(#b1)"/>
</g>
<g clip-path="url(#cHair)"><rect x="345" y="125" width="130" height="80" fill="#00b400"/>
<path d="M373.8 164.8 l-10.7 -8.6 M387.8 136.2 l1.4 -12.6 M467.9 195.6 l6.3 -2.4 M398.9 135.0 l2.8 -13.3 M362.3 152.6 l-6.3 -11.7 M381.1 136.9 l-9.1 -10.3 M448.5 147.0 l14.7 -4.3 M464.1 190.0 l5.4 -3.0 M386.6 141.9 l-0.2 -5.8 M418.0 188.0 l12.4 -8.6 M354.0 148.3 l-4.7 -3.1 M467.7 174.7 l6.1 -2.5 M354.1 191.9 l-15.4 2.3 M427.1 162.8 l13.4 -8.7 M382.2 130.8 l-5.4 -11.3 M459.9 189.9 l7.8 -3.2 M410.6 186.9 l14.8 -4.6 M354.9 186.4 l-5.9 2.8 M424.5 181.4 l14.5 -3.6 M445.3 151.8 l8.7 -1.8 M433.3 194.3 l5.9 -0.8 M418.1 151.2 l14.6 -3.1 M400.8 195.1 l8.4 -5.9 M403.2 185.5 l7.6 -3.8 M424.9 192.9 l5.1 -1.3 M364.4 179.7 l-9.8 4.1 M456.7 139.1 l7.5 -2.3 M439.2 157.6 l8.2 -6.7 M434.0 182.2 l11.3 -6.4 M441.9 196.6 l12.2 -4.7 M399.4 133.4 l-1.6 -9.0 M441.6 133.1 l7.9 -6.5 M422.5 154.9 l10.5 -3.7 M436.6 150.1 l4.4 -3.2 M414.6 197.8 l7.3 -2.2 M418.7 170.2 l6.8 -1.9 M467.6 192.3 l4.1 -4.0 M402.2 172.4 l5.3 -2.4 M431.8 167.4 l8.8 -5.3 M392.6 180.6 l-5.0 2.9 M447.5 172.4 l7.7 -5.9 M361.6 150.7 l-8.0 -9.8 M368.9 154.3 l-5.3 -7.3 M450.7 168.3 l14.2 -3.9 M428.8 184.7 l12.5 -5.5 M369.0 180.7 l-7.7 -0.2 M356.3 137.4 l-6.4 -3.7 M436.6 170.4 l6.3 -5.0 M441.4 151.2 l10.0 -2.3 M414.3 165.1 l12.2 -1.3 M412.9 173.3 l8.9 -6.3 M442.9 130.1 l13.7 -2.9 M370.6 186.6 l-7.4 4.1 M386.3 155.6 l-2.7 -7.8 M390.9 194.3 l-3.9 12.4 M373.2 157.4 l-5.6 -10.1 M378.7 140.7 l-6.5 -6.9 M434.6 196.8 l11.0 -3.9 M390.8 193.2 l-1.4 10.0 M366.5 186.1 l-13.3 6.7 M419.7 186.5 l5.3 -2.4 M373.2 197.1 l-11.6 3.9 M431.2 180.2 l12.8 -5.2 M372.5 165.3 l-10.7 -3.3 M422.5 181.1 l5.3 -2.2 M380.2 150.8 l-4.2 -6.3 M378.2 180.8 l-14.9 1.5 M445.5 138.4 l5.0 -0.7 M398.9 154.2 l1.3 -5.3 M376.4 150.1 l-3.1 -14.5 M375.8 173.0 l-14.7 0.3 M436.2 139.2 l9.8 -1.4 M378.3 150.9 l-2.5 -6.7 M414.3 166.1 l7.5 -3.0 M446.8 135.9 l7.4 -2.1 M416.1 183.8 l6.5 -5.4 M362.4 185.8 l-6.7 3.9 M468.4 139.8 l5.2 -1.5 M457.0 139.6 l8.0 -5.4 M356.0 197.7 l-12.7 3.0 M395.0 152.9 l4.9 -10.6 M397.0 183.1 l5.1 7.2 M416.8 141.1 l8.1 -6.1 M360.6 177.0 l-8.0 0.8 M383.7 154.6 l-10.6 -11.1 M358.5 156.8 l-5.2 -1.6 M422.3 132.2 l9.6 -5.3 M435.4 147.7 l6.3 -2.2 M378.7 149.9 l-4.6 -5.8 M430.7 194.9 l9.6 -7.1 M385.0 140.8 l-3.5 -9.6 M430.5 146.3 l8.2 -5.1 M421.1 161.9 l4.3 -3.1 M388.4 154.5 l1.0 -6.6 M425.7 168.1 l8.6 -1.1 M385.7 180.9 l-7.3 2.1 M390.3 142.1 l-0.7 -6.3 M443.1 162.7 l14.3 -2.8 M450.1 184.5 l10.6 -6.3 M462.1 197.2 l6.0 -1.9 M385.8 179.7 l-6.1 -1.6 M355.1 166.9 l-8.8 -2.3 M467.8 156.5 l12.6 -5.6 M366.2 152.0 l-10.7 -3.3 M425.8 148.6 l8.1 -4.0 M358.0 134.4 l-2.9 -7.9 M404.3 186.7 l4.1 -3.3 M366.0 135.1 l-8.8 -10.0 M381.6 191.9 l-3.8 10.7 M427.3 154.1 l8.4 -1.4 M464.4 143.9 l11.2 -7.2 M373.0 148.6 l-7.2 -13.7 M433.4 160.8 l8.1 -4.5 " stroke="#005c00" stroke-width="1.6" fill="none"/>
<path d="M405.4 168.1 l9.4 -4.8 M414.3 134.0 l4.3 -3.1 M404.0 187.3 l9.9 -3.6 M406.0 148.9 l14.2 -1.5 M418.0 160.4 l6.2 -1.8 M390.8 150.2 l-3.0 -5.2 M465.6 146.2 l11.4 -8.2 M460.0 153.9 l14.4 -2.5 M445.3 188.7 l8.6 -3.3 M423.8 135.5 l14.6 -1.5 M361.9 181.0 l-10.1 5.7 M372.0 160.6 l-6.6 -3.2 M425.8 163.6 l15.4 -3.3 M360.8 132.1 l-1.6 -5.2 M419.3 151.0 l4.6 -4.6 M432.8 143.6 l4.0 -3.2 M436.3 142.2 l10.7 -6.7 M406.7 174.3 l13.4 -4.1 M436.7 144.5 l15.6 -1.8 M452.4 195.9 l6.6 -2.8 M411.4 171.2 l10.6 -1.3 M446.5 168.3 l5.4 -1.8 M378.8 176.7 l-8.9 0.7 M375.3 166.1 l-8.1 -4.3 M414.5 140.9 l11.3 -4.2 M450.2 158.7 l7.1 -6.2 M365.6 164.4 l-8.3 -6.5 M374.3 134.8 l-3.9 -3.8 M468.9 193.0 l11.2 -10.6 M442.2 152.2 l8.8 -4.1 M353.6 177.7 l-6.6 -2.2 M457.4 184.5 l11.7 -2.3 M392.3 161.9 l-5.1 -7.3 M425.6 145.8 l8.2 -2.9 M419.2 166.2 l12.0 -1.2 M419.0 197.7 l5.7 -1.3 M410.5 171.6 l9.5 -1.3 M380.8 165.6 l-5.8 -11.6 M467.5 185.5 l8.9 -7.8 M376.0 133.5 l-2.3 -5.9 M457.3 183.3 l6.8 -4.2 M447.6 155.1 l8.5 -0.9 M361.3 135.6 l-6.0 -8.4 M387.3 182.7 l-4.4 5.9 M435.7 168.7 l14.9 -2.1 M381.3 154.6 l-5.4 -7.2 M397.7 143.3 l1.9 -13.6 M361.6 180.1 l-5.7 -1.7 M401.8 158.6 l15.3 -4.4 M456.7 192.2 l14.2 -6.3 M378.1 133.4 l0.6 -13.8 M353.3 162.1 l-13.3 -3.4 M383.9 178.7 l-9.4 4.3 M464.7 169.9 l11.4 -7.6 M460.2 136.2 l8.7 -6.7 M388.1 161.8 l-1.9 -8.8 M429.2 130.8 l7.3 -2.3 M406.1 130.7 l7.1 -1.7 M398.3 175.3 l4.5 -5.6 M449.6 136.3 l9.2 -8.3 M397.5 152.5 l0.1 -5.2 M391.1 153.3 l-0.1 -6.2 M458.6 167.3 l5.9 -2.9 M426.0 143.5 l9.2 -6.7 M466.9 139.2 l10.2 -4.5 M383.2 191.8 l-12.8 5.7 M375.5 161.8 l-8.6 -3.4 M427.7 132.6 l11.9 -10.0 M409.3 197.6 l9.3 -1.9 M389.8 133.7 l1.3 -14.8 M404.7 164.2 l9.1 -8.7 M458.0 150.9 l15.6 -2.3 M379.8 175.2 l-8.2 -3.9 M456.4 170.1 l12.6 -8.4 M384.7 173.5 l-15.8 -0.6 M416.7 142.7 l5.3 -0.6 M440.6 156.2 l6.3 -3.0 M428.1 154.5 l10.3 -2.7 M444.8 183.8 l6.7 -3.3 M373.2 140.3 l-8.6 -6.0 M404.1 147.9 l11.0 -10.2 M389.1 172.2 l-5.5 -5.7 M433.5 186.5 l6.9 -6.5 M399.6 174.2 l4.0 -7.8 M404.8 197.5 l7.1 -1.4 M373.5 147.8 l-10.0 -11.4 M442.4 179.2 l6.0 -6.0 M361.8 190.0 l-11.8 6.5 M387.2 175.6 l-5.8 -4.6 M402.5 156.7 l7.4 -4.4 M420.8 177.7 l5.0 -1.6 M395.0 134.3 l-0.5 -5.6 M457.2 168.5 l6.7 -2.3 M455.8 156.0 l4.6 -4.5 M379.0 176.3 l-5.0 0.7 M398.5 146.3 l1.3 -12.1 M449.3 140.8 l10.1 -4.9 M360.1 137.0 l-3.1 -5.4 M382.0 164.5 l-4.5 -8.2 M451.4 186.3 l11.2 -6.2 M367.8 176.8 l-11.9 0.3 M372.7 137.3 l-0.9 -7.7 M409.1 158.2 l4.9 -2.8 M412.7 130.7 l5.1 -0.7 M442.6 197.0 l9.3 -1.3 M397.8 155.1 l3.6 -13.4 M391.5 180.4 l-8.5 10.1 M432.3 142.1 l6.8 -5.7 M353.1 164.2 l-8.3 -2.0 M468.5 159.2 l7.6 -5.7 M373.6 154.3 l-1.9 -6.3 M422.9 168.9 l8.5 -8.3 " stroke="#00d800" stroke-width="1.7" fill="none"/>
<path d="M389.2 145.6 l-2.1 -5.4 M399.2 187.6 l7.7 13.5 M352.1 144.3 l-5.2 -8.7 M365.7 158.6 l-7.5 -2.6 M446.8 150.7 l7.4 -5.7 M427.7 136.8 l6.2 -4.7 M380.7 170.9 l-9.4 -3.4 M409.1 169.1 l5.2 -4.2 M395.5 168.9 l-2.4 -8.6 M416.4 180.1 l12.2 -3.6 M397.8 180.0 l7.6 6.2 M379.2 177.5 l-11.8 -0.4 M372.0 191.6 l-9.1 3.7 M390.6 175.3 l-9.4 -2.7 M426.2 160.4 l13.1 -4.6 M462.0 179.1 l10.5 -5.5 M396.5 168.7 l6.6 -12.1 M404.0 167.4 l4.8 -2.4 M359.6 184.4 l-7.7 4.0 M368.6 140.1 l-7.3 -10.7 M414.1 149.7 l10.1 -3.7 M452.4 171.6 l10.6 -7.8 M458.5 151.5 l7.3 -1.1 M354.1 143.7 l-9.8 -11.4 M412.7 168.7 l5.7 -4.5 M422.8 164.3 l7.6 -1.8 M439.8 182.9 l12.9 -7.3 M381.6 191.6 l-7.8 7.2 M441.0 156.5 l5.3 -1.5 M463.4 135.0 l9.0 -4.9 M430.8 161.0 l8.9 -3.7 M440.0 192.6 l5.2 -3.1 M446.8 150.7 l13.3 -7.6 M354.6 165.1 l-10.6 -3.9 M442.3 165.5 l7.5 -4.4 M431.3 163.6 l12.2 -3.7 M400.5 186.2 l13.6 -2.8 M456.9 195.1 l11.6 -5.4 M371.8 143.9 l-5.1 -6.5 M359.0 151.0 l-11.6 -3.6 M373.2 134.2 l-5.5 -10.0 M423.5 140.7 l6.6 -4.3 M364.5 156.8 l-13.1 -8.5 M460.6 159.0 l12.6 -4.6 M412.1 183.6 l6.3 -2.5 M468.4 165.1 l7.0 -1.5 M407.4 158.0 l12.7 -4.2 M418.8 191.6 l8.9 -4.1 M459.5 195.7 l9.5 -1.9 M387.3 152.1 l-9.4 -11.5 M450.9 154.1 l11.4 -9.2 M364.5 179.4 l-14.6 3.1 M451.8 176.5 l6.9 -0.9 M371.5 171.3 l-9.8 -0.4 M410.9 132.4 l10.8 -3.3 M377.5 196.0 l-3.6 9.7 M381.9 167.5 l-9.1 -4.3 M454.0 170.2 l8.3 -4.3 M385.1 178.5 l-9.2 1.2 M354.9 172.9 l-13.7 -2.6 M424.6 194.9 l14.2 -5.9 M426.0 172.2 l7.0 -3.9 M456.6 151.3 l11.9 -3.9 M381.7 178.7 l-8.5 1.8 M373.8 130.9 l-5.2 -14.4 M446.5 187.0 l10.2 -5.9 M373.5 162.9 l-3.5 -6.3 M429.5 172.4 l14.4 -2.1 M447.6 183.9 l12.0 -6.9 M396.6 173.8 l1.3 -11.7 M453.1 172.7 l5.8 -2.5 M422.0 170.4 l7.8 -6.5 M439.1 151.3 l9.4 -1.0 M366.9 197.3 l-6.2 4.3 M428.6 193.8 l10.3 -2.5 " stroke="#008a00" stroke-width="1.4" fill="none"/>
<path d="M388 172 C392 160 402 152 412 146 M396 182 C398 170 404 164 412 160 M384 178 C386 168 390 160 398 152" stroke="#005000" stroke-width="2.2" fill="none"/>
</g>
<rect x="416" y="463" width="10" height="10" fill="#0a0a14"/>
<rect x="411" y="529.5" width="10" height="10" fill="#00ff00" stroke="#061006" stroke-width="1"/>
<path d="M193.0 130.5 L253.0 125.5 M193.0 130.5 L233.2 145.0 M193.0 130.5 L182.5 281.2 M492.0 105.5 L433.0 110.0 M492.0 105.5 L532.5 120.0 M492.0 105.5 L480.8 255.8 M693.8 178.2 L654.5 164.0 M693.8 178.2 L635.0 183.8 M693.8 178.2 L682.5 328.8 M395.0 203.8 L355.0 190.0 M395.0 203.8 L455.0 199.0 M395.0 203.8 L383.8 355.0 M138.0 889.5 L149.2 739.5 M138.0 889.5 L196.2 884.5 M138.0 889.5 L177.0 904.2 M338.8 962.5 L350.8 812.0 M338.8 962.5 L299.5 948.8 M338.8 962.5 L398.8 957.5 M637.5 937.5 L648.8 786.2 M637.5 937.5 L598.0 923.0 M637.5 937.5 L578.8 943.0 " stroke="#00ff00" stroke-width="2.5" fill="none"/>
<g id="gizmo">
<path d="M93.2 844 L91.3 883" stroke="#0a8a0a" stroke-width="1"/>
<path d="M88 860.5 C103 858 124 870 125.5 892 L125.5 902 L102 902 L102.5 895 C101 888 95 883 88 882.5Z" fill="#6464ff"/>
<path d="M125.2 880 L125.2 902" stroke="#2020ff" stroke-width="1"/>
<path d="M84.5 882.5 C94 882 102.5 890 102.5 902 L102.5 909 L91 910 L84.5 905Z" fill="#ff6464"/>
<path d="M86 883 C94 886 98 894 98 908 M84.7 884 L84.7 904 M102.3 895 L102.3 909" stroke="#e00000" stroke-width="1" fill="none"/>
<path d="M84 904 L90 910 L96 911" stroke="#606060" stroke-width="1.6" fill="none"/>
<path d="M103 903 C110 900 122 900 124 905 L124 913 C122 917 112 918 108 917 L90 909 L102 909Z" fill="#00d000"/>
<path d="M103 909 L110 913 L110 917" stroke="#00a000" stroke-width="1" fill="none"/>
<path d="M125.5 901.5 L139.5 900" stroke="#ff3030" stroke-width="1"/>
<path d="M103.5 908.5 L126.5 917.5" stroke="#1818e8" stroke-width="1"/>
<text x="92" y="836.5" font-family="Liberation Sans, sans-serif" font-size="11.5" fill="#111">y</text>
<text x="146" y="904.5" font-family="Liberation Sans, sans-serif" font-size="11.5" fill="#111">x</text>
<text x="130" y="926" font-family="Liberation Sans, sans-serif" font-size="11.5" fill="#111">z</text>
</g>
<g id="warn">
<path d="M727.5 872.5 L683.8 950.5 L771.2 950.5Z" fill="#6a4a72" stroke="#6a4a72" stroke-width="21.4" stroke-linejoin="round"/>
<path d="M727.5 872.5 L683.8 950.5 L771.2 950.5Z" fill="#c41e00" stroke="#c41e00" stroke-width="20" stroke-linejoin="round"/>

<path d="M727.5 882 L691 945 L764 945Z" fill="#dedede" stroke="#dedede" stroke-width="10" stroke-linejoin="round"/>
<path d="M722.5 891.5 L732 891.5 L730 932.5 L725 932.5Z" fill="#c41e00"/>
<rect x="723" y="936.3" width="8.6" height="7.6" fill="#c41e00"/>
</g>
</svg>
</div>
<div id="splitter" class="abs"></div>
<div id="ctx" class="abs"></div>
<div class="abs" style="left:826px;top:520px;width:2px;height:30px;background:repeating-linear-gradient(#b0b0b0 0 2px,transparent 2px 4px);"></div>
<div id="ctxtext" class="abs">Context area</div>
<div id="rightbg" class="abs"></div>
<div id="tree" class="abs"></div>
<!-- tree content -->
<svg class="abs" style="left:853px;top:85px" width="100" height="40" viewBox="853 85 100 40">
  <path d="M866.5 95.5H872 M862.5 100V112.5H871" stroke="#b8b8b8" stroke-width="1" stroke-dasharray="1 1" fill="none"/>
  <rect x="858.5" y="91.5" width="8" height="8" fill="#fff" stroke="#8a8a8a"/>
  <path d="M860.5 95.5H864.5 M862.5 93.5V97.5" stroke="#000" stroke-width="1"/>
  <defs>
    <radialGradient id="sg1" cx="35%" cy="30%" r="70%"><stop offset="0" stop-color="#fff"/><stop offset="1" stop-color="#9a9a9a"/></radialGradient>
    <radialGradient id="sg2" cx="35%" cy="30%" r="70%"><stop offset="0" stop-color="#999"/><stop offset="1" stop-color="#333"/></radialGradient>
  </defs>
  <circle cx="881" cy="91.5" r="4.3" fill="url(#sg2)"/>
  <circle cx="886" cy="96.5" r="4.6" fill="url(#sg1)"/>
  <circle cx="880" cy="98" r="4.3" fill="url(#sg1)"/>
  <path d="M875 106.5H891 M875 109.5H891 M875 112.5H891 M875 115.5H891 M875 118H891" stroke="#4a4a4a" stroke-width="1.6"/>
</svg>
<div class="tl abs" style="left:896px;top:89.5px;">Parts</div>
<div class="tl abs" style="left:896px;top:107px;">Slices</div>
<svg class="abs" style="left:1144px;top:88px" width="20" height="32" viewBox="0 0 20 32">
  <g><path d="M2 2 L6 2 L7 3.5 L12 3.5 L12 6 L2 12Z" fill="#f6b048"/><path d="M2 12 L5 6 L15 6 L12 12Z" fill="#f28c14"/><path d="M10 4.5 C13 1.5 16.5 3 16 7 M16 7 l-2.2 -1.2 M16 7 l1.5 -2" stroke="#707070" stroke-width="1.3" fill="none"/></g>
  <g transform="translate(0,17.5)"><path d="M2 2 L6 2 L7 3.5 L12 3.5 L12 6 L2 12Z" fill="#f6b048"/><path d="M2 12 L5 6 L15 6 L12 12Z" fill="#f28c14"/><path d="M10 4.5 C13 1.5 16.5 3 16 7 M16 7 l-2.2 -1.2 M16 7 l1.5 -2" stroke="#707070" stroke-width="1.3" fill="none"/></g>
</svg>
<!-- tab control -->
<div class="abs" style="left:856px;top:638px;width:306px;height:338px;box-sizing:border-box;background:#fff;border:1px solid #7f7f7f;"></div>
<div class="abs" style="left:856px;top:618px;width:58px;height:21px;box-sizing:border-box;background:#fff;border:1px solid #7f7f7f;border-bottom:none;"></div>
<div class="f" style="left:864px;top:621px;">Plane cut</div>
<!-- Information group -->
<div class="gb" style="left:863px;top:655px;width:292px;height:193px;"></div>
<div class="f gbt" style="left:869px;top:648px;">Information</div>
<div class="f g" style="left:880px;top:671px;">Base point</div>
<div class="inp" style="left:968px;top:667px;width:47px;height:21px;"></div><div class="f g" style="left:974.5px;top:671px;">-1.773</div>
<div class="inp" style="left:1021px;top:667px;width:48px;height:21px;"></div><div class="f g" style="left:1027.5px;top:671px;">50.000</div>
<div class="inp" style="left:1075px;top:667px;width:48px;height:21px;"></div><div class="f g" style="left:1081px;top:671px;">5.773</div>
<div class="f g" style="left:1128px;top:671px;">mm</div>
<div class="f" style="left:880px;top:696px;">Move parallel:</div>
<div class="inp" style="left:995px;top:692px;width:48px;height:22px;border:1px solid #6e6e6e;box-shadow:inset 0 0 0 0.5px #999;"></div><div class="f" style="left:1002px;top:696px;">1</div>
<div class="f" style="left:1048px;top:696px;">mm</div>
<div class="btn f" style="left:1076px;top:693px;width:19px;height:19px;line-height:17px;">+</div>
<div class="btn f" style="left:1103px;top:693px;width:19px;height:19px;line-height:17px;">-</div>
<div class="f g" style="left:880px;top:721px;">Roll:</div>
<div class="f g" style="left:880px;top:746px;">Pitch:</div>
<div class="f g" style="left:880px;top:771px;">Yaw:</div>
<div class="f g" style="left:880px;top:797px;">Size:</div>
<div class="sb" style="left:942px;top:719px;width:127px;"><i style="left:0;border-right:1px solid #c3c3c3;"></i><i style="right:0;border-left:1px solid #c3c3c3;"></i></div>
<svg class="abs" style="left:942px;top:719px" width="127" height="16" viewBox="0 0 127 16"><path d="M10.5 4 L6.5 8 L10.5 12 M116.5 4 L120.5 8 L116.5 12" fill="none" stroke="#555" stroke-width="1.3"/></svg>
<div class="inp" style="left:1075px;top:718px;width:48px;height:21px;"></div>
<div class="f g" style="left:1129.5px;top:720px;font-size:8px;">°</div>
<div class="sb" style="left:942px;top:745px;width:127px;"><i style="left:0;border-right:1px solid #c3c3c3;"></i><i style="right:0;border-left:1px solid #c3c3c3;"></i></div>
<svg class="abs" style="left:942px;top:745px" width="127" height="16" viewBox="0 0 127 16"><path d="M10.5 4 L6.5 8 L10.5 12 M116.5 4 L120.5 8 L116.5 12" fill="none" stroke="#555" stroke-width="1.3"/></svg>
<div class="inp" style="left:1075px;top:743px;width:48px;height:21px;"></div>
<div class="f g" style="left:1129.5px;top:745px;font-size:8px;">°</div>
<div class="sb" style="left:942px;top:770px;width:127px;"><i style="left:0;border-right:1px solid #c3c3c3;"></i><i style="right:0;border-left:1px solid #c3c3c3;"></i></div>
<svg class="abs" style="left:942px;top:770px" width="127" height="16" viewBox="0 0 127 16"><path d="M10.5 4 L6.5 8 L10.5 12 M116.5 4 L120.5 8 L116.5 12" fill="none" stroke="#555" stroke-width="1.3"/></svg>
<div class="inp" style="left:1075px;top:768px;width:48px;height:21px;"></div>
<div class="f g" style="left:1129.5px;top:770px;font-size:8px;">°</div>

<div class="inp" style="left:935px;top:793px;width:84px;height:21px;"></div>
<div class="f g" style="left:1025px;top:797px;font-size:11px;">X</div>
<div class="inp" style="left:1039px;top:793px;width:84px;height:21px;"></div>
<div class="f" style="left:1128px;top:797px;">mm</div>
<!-- Cutting options group -->
<div class="gb" style="left:863px;top:864px;width:292px;height:72px;"></div>
<div class="f gbt" style="left:869.5px;top:858px;">Cutting options</div>
<div class="cbx" style="left:872px;top:878px;border-color:#333;"></div><div class="f" style="left:888px;top:877.5px;">Only selected parts</div>
<div class="cbx" style="left:872px;top:897px;"></div><div class="f g" style="left:888px;top:896px;">Use Plane boundary</div>
<div class="cbx" style="left:872px;top:915px;"></div><div class="f g" style="left:888px;top:914.5px;">Stitch parts</div>
<div class="cbx" style="left:1010px;top:878px;"></div><div class="f g" style="left:1026px;top:877.5px;">Remove original parts</div>
<div class="cbx" style="left:1010px;top:897px;border-color:#333;"></div><div class="f" style="left:1026px;top:896px;">Triangulate cuts</div>
<div class="cbx" style="left:1010px;top:915px;"></div><div class="f g" style="left:1026px;top:914.5px;">Create group</div>
<svg class="abs" style="left:872px;top:878px" width="152" height="52" viewBox="0 0 152 52">
  <path d="M3 6.5 L5.5 9.5 L10.5 3" fill="none" stroke="#bdbdbd" stroke-width="1.6" transform="translate(0,37)"/>
  <path d="M3 6.5 L5.5 9.5 L10.5 3" fill="none" stroke="#bdbdbd" stroke-width="1.6" transform="translate(138,0)"/>
  <path d="M3 6.5 L5.5 9.5 L10.5 3" fill="none" stroke="#bdbdbd" stroke-width="1.6" transform="translate(138,37)"/>
  <path d="M3 6.5 L5.5 9.5 L10.5 3" fill="none" stroke="#111" stroke-width="2" transform="translate(138,19)"/>
</svg>
<div class="btn f" style="left:864px;top:943px;width:140px;height:23px;line-height:22px;border-color:#adadad;">Cancel</div>
<div class="btn f" style="left:1011px;top:943px;width:142px;height:23px;line-height:22px;border-color:#adadad;">Cut</div>
<!-- bottom separator -->
<div class="abs" style="left:851px;top:984px;width:317px;height:3px;background:#a2a2a2;"></div>
<div class="abs" style="left:851px;top:616px;width:1px;height:368px;background:#fbfbfb;"></div>
<div class="abs" style="left:829px;top:985px;width:22px;height:2px;background:#a2a2a2;"></div>
<div class="abs" style="left:1162px;top:638px;width:1px;height:346px;background:#9a9a9a;"></div>
<div class="abs" style="left:1166px;top:84px;width:1px;height:900px;background:#b4b4b4;"></div>
<!-- status bar -->
<div id="status" class="abs">
  <div class="abs" style="left:0;top:6px;width:16px;height:14px;background:#f0f0f0;"></div>
  <div class="abs" style="left:210px;top:1px;width:1px;height:18px;background:#e2e2e2;"></div>
  <div class="abs" style="left:694px;top:1px;width:1px;height:18px;background:#e2e2e2;"></div>
  <div class="abs" style="left:722px;top:7px;width:412px;height:11px;box-sizing:border-box;background:#c9c9c9;border:1px solid #a6a6a6;"></div>
  <svg class="abs" style="left:1148px;top:8px" width="12" height="12" viewBox="0 0 12 12"><path d="M9 2v1M9 5v1M9 8v1M6 5v1M6 8v1M3 8v1" stroke="#b0b0b0" stroke-width="1.5"/></svg>
</div>
</body>
</html>
